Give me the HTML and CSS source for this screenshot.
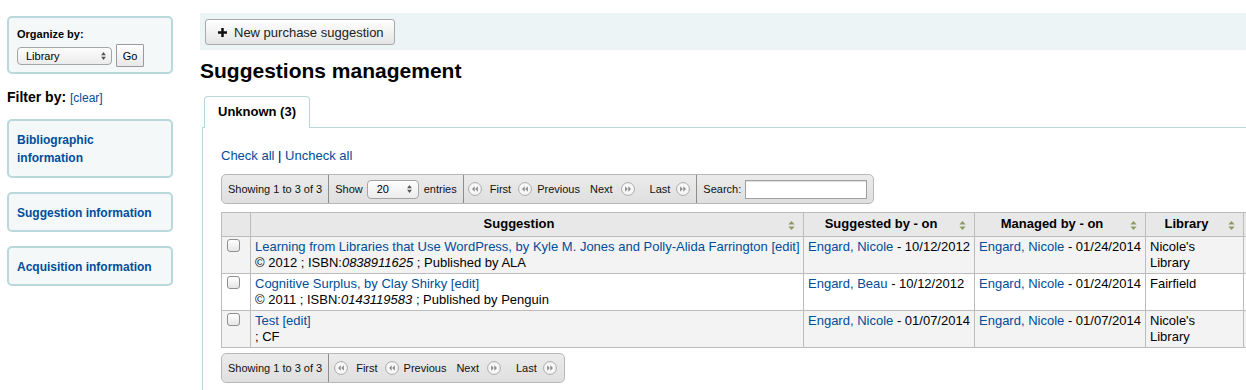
FILE: index.html
```html
<!DOCTYPE html>
<html lang="en">
<head>
  <meta charset="UTF-8">
  <title>Suggestions management</title>
  <link rel="stylesheet" href="styles.css">
</head>
<body>
  <div class="page">
    <aside class="sidebar">
      <form class="box organize">
        <label>Organize by:</label>
        <div class="org-row">
          <span class="select lib">Library
            <svg class="updown" viewBox="0 0 6 10"><path d="M3 0L6 4H0z M3 10L6 6H0z"/></svg>
          </span>
          <button type="button" class="go">Go</button>
        </div>
      </form>
      <h4 class="filter">Filter by: <a href="#">[clear]</a></h4>
      <div class="box link biblio"><a href="#">Bibliographic information</a></div>
      <div class="box link"><a href="#">Suggestion information</a></div>
      <div class="box link"><a href="#">Acquisition information</a></div>
    </aside>

    <main class="main">
      <div class="toolbar">
        <button type="button" class="btn">
          <svg class="plus" viewBox="0 0 10 10"><path d="M3.6 0h2.8v3.6H10v2.8H6.4V10H3.6V6.4H0V3.6h3.6z"/></svg>
          New purchase suggestion
        </button>
      </div>

      <h1>Suggestions management</h1>

      <ul class="tabs">
        <li class="active">Unknown (3)</li>
      </ul>

      <div class="panel">
        <p class="checks"><a href="#">Check all</a> | <a href="#">Uncheck all</a></p>

        <div class="pager">
          <div class="sec">Showing 1 to 3 of 3</div>
          <div class="sec show">Show
            <span class="select len">20
              <svg class="updown" viewBox="0 0 6 10"><path d="M3 0L6 4H0z M3 10L6 6H0z"/></svg>
            </span>
            entries</div>
          <div class="sec paging">
            <span class="pg first"><svg class="ico" viewBox="0 0 14 14"><circle cx="7" cy="7" r="6.4"/><path d="M6.7 4.3v5.4L4 7z M9.9 4.3v5.4L7.2 7z"/></svg>First</span>
            <span class="pg prev"><svg class="ico" viewBox="0 0 14 14"><circle cx="7" cy="7" r="6.4"/><path d="M6.7 4.3v5.4L4 7z M9.9 4.3v5.4L7.2 7z"/></svg>Previous</span>
            <span class="pg next">Next<svg class="ico" viewBox="0 0 14 14"><circle cx="7" cy="7" r="6.4"/><path d="M4.1 4.3v5.4L6.8 7z M7.3 4.3v5.4L10 7z"/></svg></span>
            <span class="pg last">Last<svg class="ico" viewBox="0 0 14 14"><circle cx="7" cy="7" r="6.4"/><path d="M4.1 4.3v5.4L6.8 7z M7.3 4.3v5.4L10 7z"/></svg></span>
          </div>
          <div class="sec search">Search: <input type="text"></div>
        </div>

        <table class="sugg">
          <colgroup>
            <col style="width:29px"><col style="width:553px"><col style="width:171px"><col style="width:171px"><col style="width:98px"><col style="width:90px">
          </colgroup>
          <thead>
            <tr>
              <th class="nosort"></th>
              <th>Suggestion<svg class="sort" viewBox="0 0 7 10"><path d="M3.5 0L7 4H0z M3.5 10L7 6H0z"/></svg></th>
              <th>Suggested by - on<svg class="sort" viewBox="0 0 7 10"><path d="M3.5 0L7 4H0z M3.5 10L7 6H0z"/></svg></th>
              <th>Managed by - on<svg class="sort" viewBox="0 0 7 10"><path d="M3.5 0L7 4H0z M3.5 10L7 6H0z"/></svg></th>
              <th>Library<svg class="sort" viewBox="0 0 7 10"><path d="M3.5 0L7 4H0z M3.5 10L7 6H0z"/></svg></th>
              <th class="nosort"></th>
            </tr>
          </thead>
          <tbody>
            <tr class="odd">
              <td class="cb"><input type="checkbox"></td>
              <td><span class="title"><a href="#">Learning from Libraries that Use WordPress, by Kyle M. Jones and Polly-Alida Farrington</a> <a href="#">[edit]</a></span><br>© 2012 ; ISBN:<i>0838911625</i> ; Published by ALA</td>
              <td><a href="#">Engard, Nicole</a> - 10/12/2012</td>
              <td><a href="#">Engard, Nicole</a> - 01/24/2014</td>
              <td class="lib">Nicole's Library</td>
              <td></td>
            </tr>
            <tr>
              <td class="cb"><input type="checkbox"></td>
              <td><span class="title"><a href="#">Cognitive Surplus, by Clay Shirky</a> <a href="#">[edit]</a></span><br>© 2011 ; ISBN:<i>0143119583</i> ; Published by Penguin</td>
              <td><a href="#">Engard, Beau</a> - 10/12/2012</td>
              <td><a href="#">Engard, Nicole</a> - 01/24/2014</td>
              <td class="lib">Fairfield</td>
              <td></td>
            </tr>
            <tr class="odd">
              <td class="cb"><input type="checkbox"></td>
              <td><span class="title"><a href="#">Test</a> <a href="#">[edit]</a></span><br>; CF</td>
              <td><a href="#">Engard, Nicole</a> - 01/07/2014</td>
              <td><a href="#">Engard, Nicole</a> - 01/07/2014</td>
              <td class="lib">Nicole's Library</td>
              <td></td>
            </tr>
          </tbody>
        </table>

        <div class="pager bottom">
          <div class="sec">Showing 1 to 3 of 3</div>
          <div class="sec paging">
            <span class="pg first"><svg class="ico" viewBox="0 0 14 14"><circle cx="7" cy="7" r="6.4"/><path d="M6.7 4.3v5.4L4 7z M9.9 4.3v5.4L7.2 7z"/></svg>First</span>
            <span class="pg prev"><svg class="ico" viewBox="0 0 14 14"><circle cx="7" cy="7" r="6.4"/><path d="M6.7 4.3v5.4L4 7z M9.9 4.3v5.4L7.2 7z"/></svg>Previous</span>
            <span class="pg next">Next<svg class="ico" viewBox="0 0 14 14"><circle cx="7" cy="7" r="6.4"/><path d="M4.1 4.3v5.4L6.8 7z M7.3 4.3v5.4L10 7z"/></svg></span>
            <span class="pg last">Last<svg class="ico" viewBox="0 0 14 14"><circle cx="7" cy="7" r="6.4"/><path d="M4.1 4.3v5.4L6.8 7z M7.3 4.3v5.4L10 7z"/></svg></span>
          </div>
        </div>
      </div>
    </main>
  </div>
</body>
</html>
```

FILE: styles.css
```css
:root{
  --link:#004d99;
  --teal:#b9d8d9;
  --teal-bg:#f4f8f9;
  --grid:#bcbcbc;
}
*{box-sizing:border-box}
html,body{margin:0;overflow:hidden}
body{font-family:"Liberation Sans",Arial,sans-serif;font-size:13px;color:#000;background:#fff}
a{color:var(--link);text-decoration:none}

.page{display:flex;align-items:flex-start}

/* sidebar */
.sidebar{width:200px;flex:none;padding:16px 0 0 7px}
.box{width:166px;border:2px solid var(--teal);border-radius:5px;background:var(--teal-bg)}
.organize{padding:9px 8px 5px;margin:0}
.organize label{display:block;font-size:11px;font-weight:bold;line-height:14px;margin-bottom:3px}
.org-row{display:flex;align-items:center;gap:4px}
.select{display:inline-flex;align-items:center;justify-content:space-between;height:18px;border:1px solid #a4a4a4;border-radius:4px;background:linear-gradient(#fdfdfd,#ececec);font-size:11px;padding:0 5px 0 8px;color:#000}
.select.lib{width:95px}
.updown{width:5px;height:8px;fill:#555}
.go{height:23px;width:28px;padding:0;border:1px solid #9a9a9a;border-radius:1px;background:linear-gradient(#fff,#e8e8e8);font:11px "Liberation Sans",Arial,sans-serif;color:#000}
.filter{font-size:14px;line-height:17px;margin:15px 0 12px}
.filter a{font-size:12px;font-weight:normal}
.box.link{padding:10px 14px 8px 8px;margin-bottom:14px;line-height:18px}
.box.link.biblio{padding-bottom:9px}
.box.link a{font-size:12px;font-weight:bold}

/* main */
.main{flex:1;min-width:0;padding-top:13px}
.toolbar{background:#edf4f6;height:37px;padding:6px 5px}
.btn{display:inline-flex;align-items:center;gap:7px;height:26px;padding:0 10px 0 12px;border:1px solid #aaa;border-radius:3px;background:linear-gradient(#fff,#e4e4e4);font:13px "Liberation Sans",Arial,sans-serif;color:#222}
.plus{width:9px;height:9px;fill:#111}
h1{font-size:21px;line-height:24px;margin:9px 0 0}

.tabs{list-style:none;margin:13px 0 0 4px;padding:0;display:flex;position:relative;z-index:1}
.tabs li{font-weight:bold;font-size:13px;height:32px;line-height:29px;padding:0 13px;border:1px solid var(--teal);border-bottom:none;border-radius:4px 4px 0 0;background:#fff}

.panel{margin:-1px 0 0 2px;border-left:1px solid var(--teal);border-top:1px solid var(--teal);padding:20px 0 40px 18px}
.checks{margin:0 0 10px;line-height:16px}

/* datatables pager */
.pager{display:inline-flex;height:30px;border:1px solid #b8b8b8;border-radius:5px;background:linear-gradient(#ebebeb,#dfdfdf);font-size:11px;color:#111}
.pager .sec{display:flex;align-items:center;padding:0 6px;border-left:1px solid #8d8d8d;white-space:nowrap}
.pager .sec:first-child{border-left:none}
.show .select.len{width:52px;height:19px;margin:0 5px 0 4px;font-size:11px;padding:0 6px 0 9px}
.paging{padding:0 6px 0 4px !important}
.pg{display:inline-flex;align-items:center;gap:8px;margin-right:7px}
.pg.prev{gap:5px;margin-right:10px}
.pg.next{margin-right:15px}
.pg.last{gap:6px;margin-right:0}
.ico{width:14px;height:14px}
.ico circle{fill:#f7f7f7;stroke:#a9a9a9}
.ico path{fill:#8e8e8e}
.search input{width:122px;height:19px;margin-left:4px;border:1px solid #a0a0a0;box-shadow:inset 0 1px 1px #ddd;padding:0 3px}
.pager.bottom{margin-top:5px}
.pager.bottom .paging{padding:0 7px 0 5px !important}

/* table */
.sugg{border-collapse:collapse;table-layout:fixed;width:1112px;margin-top:8px;border:1px solid var(--grid)}
.sugg th,.sugg td{border:1px solid var(--grid);text-align:left;vertical-align:top}
.sugg th{background:#e8e8e8;font-size:13px;line-height:16px;padding:3px 20px 4px 4px;text-align:center;position:relative;white-space:nowrap}
.sugg th.nosort{padding:0}
.sort{position:absolute;right:8px;top:8px;width:7px;height:9px;fill:#8d9b62}
.sugg td{padding:2px 4px 2px 4px;line-height:16px}
.sugg td .title{white-space:nowrap}
.sugg td.lib{padding-right:12px}
.sugg tr.odd td{background:#f3f3f3}
.sugg td.cb{padding:2px 0 0 5px}
.cb input{appearance:none;-webkit-appearance:none;width:13px;height:13px;margin:0;border:1px solid #8f8f8f;border-radius:3px;background:linear-gradient(#fff,#e6e6e6);display:block}
```
